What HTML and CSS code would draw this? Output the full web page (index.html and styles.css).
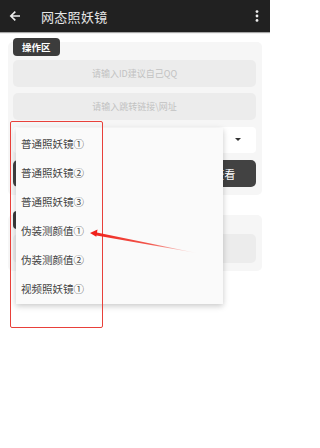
FILE: index.html
```html
<!DOCTYPE html>
<html lang="zh">
<head>
<meta charset="utf-8">
<link rel="stylesheet" href="styles.css">
</head>
<body>
<div class="app">
  <header class="bar">
    <svg class="back" width="12" height="12" viewBox="0 0 12 12"><path d="M11 6H2.2M6.3 1.6L1.8 6l4.5 4.4" fill="none" stroke="#eee" stroke-width="1.6"/></svg>
    <div class="title">网态照妖镜</div>
    <svg class="more" width="4" height="12" viewBox="0 0 4 12"><circle cx="2" cy="1.6" r="1.4" fill="#eee"/><circle cx="2" cy="6" r="1.4" fill="#eee"/><circle cx="2" cy="10.4" r="1.4" fill="#eee"/></svg>
  </header>
  <main class="content">
    <section class="card">
      <div class="badge">操作区</div>
      <div class="field">请输入ID建议自己QQ</div>
      <div class="field">请输入跳转链接\网址</div>
      <div class="spinner"><span class="caret"></span></div>
      <div class="btns">
        <div class="btn"></div>
        <div class="btn">生成链接并查看</div>
      </div>
    </section>
    <section class="card card2">
      <div class="badge badge-empty"></div>
      <div class="field tall"></div>
    </section>
  </main>
  <div class="menu">
    <div class="item">普通照妖镜①</div>
    <div class="item">普通照妖镜②</div>
    <div class="item">普通照妖镜③</div>
    <div class="item">伪装测颜值①</div>
    <div class="item">伪装测颜值②</div>
    <div class="item">视频照妖镜①</div>
  </div>
  <div class="mark"></div>
  <svg class="arrow" width="270" height="448" viewBox="0 0 270 448">
    <defs>
      <linearGradient id="g" x1="198" y1="253" x2="90" y2="233" gradientUnits="userSpaceOnUse">
        <stop offset="0" stop-color="#f03a2e" stop-opacity="0"/>
        <stop offset="0.45" stop-color="#f03a2e" stop-opacity="0.85"/>
        <stop offset="1" stop-color="#f0201a"/>
      </linearGradient>
    </defs>
    <polygon points="198,253.3 95,235.2 95.6,232.2" fill="url(#g)"/>
    <polygon points="90,233 97.5,229.6 96.3,236.8" fill="#f0201a"/>
  </svg>
</div>
</body>
</html>
```

FILE: styles.css
```css
* { box-sizing: border-box; }
html, body { margin: 0; padding: 0; background: #fff; }
body {
  font-family: "Noto Sans CJK SC", "Noto Sans", sans-serif;
  width: 270px;
  height: 448px;
  overflow: hidden;
}
.app { position: relative; width: 270px; height: 448px; }
.bar {
  height: 32px;
  background: #212121;
  display: flex;
  align-items: center;
  padding: 0 11px 0 9px;
  box-shadow: 0 1px 1px rgba(0,0,0,0.35);
  position: relative;
}
.back { display: block; }
.title {
  margin-left: 20px;
  color: #e6e6e6;
  font-size: 13px;
  letter-spacing: 0.3px;
  flex: 1;
}
.more { display: block; }
.content { padding: 10px 8px 0 8px; }
.card {
  background: #f6f6f6;
  border-radius: 5px;
  padding: 0 6px 8px 5px;
  display: flex;
  flex-direction: column;
  gap: 6px;
}
.badge {
  align-self: flex-start;
  margin-top: -4px;
  margin-bottom: -2px;
  height: 18px;
  padding: 0 9px;
  background: #3c3c3c;
  color: #fff;
  font-size: 9.5px;
  line-height: 18px;
  border-radius: 4px;
  font-weight: bold;
}
.badge-empty { width: 44px; }
.field {
  height: 27px;
  background: #ececec;
  border-radius: 5px;
  color: #c2c2c2;
  font-size: 9px;
  display: flex;
  align-items: center;
  justify-content: center;
}
.field.tall { height: 29px; }
.spinner {
  height: 26px;
  margin-top: 1px;
  background: #fff;
  border-radius: 4px;
  position: relative;
}
.caret {
  position: absolute;
  right: 15px;
  top: 11px;
  width: 0; height: 0;
  border-left: 3px solid transparent;
  border-right: 3px solid transparent;
  border-top: 3.5px solid #333;
}
.btns { display: flex; gap: 6px; margin-top: 1px; }
.btn {
  flex: 1;
  height: 27px;
  background: #424242;
  color: #fff;
  font-size: 11px;
  border-radius: 5px;
  display: flex;
  align-items: center;
  justify-content: center;
}
.card2 { margin-top: 20px; padding-top: 0; }
.card2 .badge { margin-bottom: -1px; }
.menu {
  position: absolute;
  left: 16px;
  top: 128px;
  width: 207px;
  padding: 1px 0;
  background: #fafafa;
  box-shadow: 0 2px 6px rgba(0,0,0,0.22);
}
.item {
  height: 29px;
  line-height: 29px;
  padding-left: 5px;
  font-size: 10.5px;
  color: #444;
}
.mark {
  position: absolute;
  left: 10px;
  top: 121px;
  width: 93px;
  height: 207px;
  border: 1.5px solid #e8403a;
  border-radius: 2px;
}
.arrow { position: absolute; left: 0; top: 0; pointer-events: none; }
```
